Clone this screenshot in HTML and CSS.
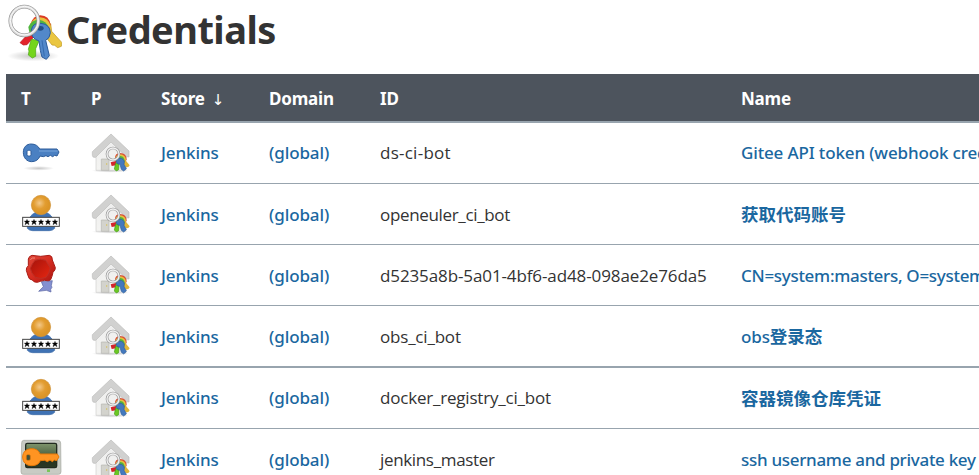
FILE: index.html
```html
<!DOCTYPE html>
<html lang="en">
<head>
<meta charset="utf-8">
<title>Credentials</title>
<link rel="stylesheet" href="styles.css">
</head>
<body>
<svg class="defs" aria-hidden="true">
  <defs>
    <radialGradient id="shade"><stop offset="0" stop-color="#000" stop-opacity=".22"/><stop offset="1" stop-color="#000" stop-opacity="0"/></radialGradient>
    <radialGradient id="head" cx=".42" cy=".4"><stop offset="0" stop-color="#f3c888"/><stop offset=".6" stop-color="#e29d31"/><stop offset="1" stop-color="#dc9527"/></radialGradient>
    <linearGradient id="wax" x2="1" y2="1"><stop offset="0" stop-color="#df4a3c"/><stop offset=".5" stop-color="#d62c20"/><stop offset="1" stop-color="#a81410"/></linearGradient>
    <linearGradient id="disc" x2="1" y2="1"><stop offset="0" stop-color="#a5130b"/><stop offset="1" stop-color="#e62611"/></linearGradient>
    <linearGradient id="screen" x2="0" y2="1"><stop offset="0" stop-color="#7f966d"/><stop offset=".5" stop-color="#4c6040"/><stop offset=".55" stop-color="#24311e"/><stop offset="1" stop-color="#2c3925"/></linearGradient>
    <linearGradient id="wall" x2="0" y2="1"><stop offset="0" stop-color="#ededed"/><stop offset="1" stop-color="#f4f4f2"/></linearGradient>
  </defs>
  <symbol id="key" viewBox="30 21 126 126">
    <ellipse cx="86" cy="130" rx="46" ry="7" fill="url(#shade)"/>
    <path d="M64 57c12 0 21 6 25 15h52l6 9-6 12-7-2-6 4-7-4-7 4-6-3-8 3-10-2c-4 11-13 17-25 17-15 0-25-12-25-28 0-15 9-25 24-25z" fill="#4a80c2" stroke="#2c5b99" stroke-width="3"/>
    <path d="M87 78h56" stroke="#79a5da" stroke-width="3"/>
    <rect x="51" y="76" width="12" height="17" rx="4" fill="#fff" stroke="#2c5b99" stroke-width="3"/>
  </symbol>
  <symbol id="user" viewBox="30 24 126 126">
    <path d="M52 130C52 98 66 80 93 80S134 98 134 130Q128 137 118 137H68Q58 137 52 130Z" fill="#3f72b4" stroke="#3565a4" stroke-width="2"/>
    <circle cx="93" cy="60" r="29" fill="url(#head)" stroke="#cf9239" stroke-width="2"/>
    <rect x="38" y="97" width="110" height="27" fill="#fff" stroke="#444" stroke-width="3"/>
    <g fill="#000" stroke="#000" stroke-width="1"><path id="star" d="M51 103l2 5 6 0-4 4 2 7-6-4-6 4 2-7-4-4 6 0z"/><use href="#star" x="21"/><use href="#star" x="42"/><use href="#star" x="63"/><use href="#star" x="84"/></g>
  </symbol>
  <symbol id="seal" viewBox="30 27 126 126">
    <path d="M94 110l33-3-3 15 2 5-4 6 1 8-14-5-23 3 14-14z" fill="#8490d0" stroke="#5963a2" stroke-width="2"/>
    <path d="M66 31Q92 37 118 31Q128 33 127 45L136 68Q137 74 129 82Q126 96 122 104Q116 110 104 106Q92 108 82 112Q70 112 67 105Q56 104 54 92L49 76Q48 68 55 62L55 42Q57 33 66 31Z" fill="url(#wax)" stroke="#a91c15" stroke-width="3"/>
    <path d="M75 46Q92 39 107 46L121 69Q118 86 108 97Q92 104 76 97Q63 84 61 70Q66 56 75 46Z" fill="url(#disc)" stroke="#bd3026" stroke-width="3"/>
    <path d="M61 44q5-7 14-5" fill="none" stroke="#ef8a7b" stroke-width="3"/>
  </symbol>
  <symbol id="terminal" viewBox="30 27 126 126">
    <path d="M41 34h104q6 0 7 8l1 86q0 8-8 8H40q-7 0-7-8l2-86q0-8 6-8z" fill="#c8cbc4" stroke="#a3a69f" stroke-width="2"/>
    <rect x="47" y="43" width="93" height="73" rx="5" fill="url(#screen)" stroke="#222b20" stroke-width="4"/>
    <path d="M65 59c13 0 22 6 25 16h52l5 9-7 11-7-2-6 5-7-5-8 5-8-4-13 1c-4 10-13 15-26 15-16 0-27-10-27-26 0-15 11-25 27-25z" fill="#ff9422" stroke="#e67909" stroke-width="3"/>
    <rect x="49" y="77" width="12" height="17" rx="4" fill="#435039" stroke="#dc790b" stroke-width="2"/>
    <rect x="111" y="121" width="9" height="8" fill="#7bc558"/>
  </symbol>
  <symbol id="store" viewBox="240 21 126 126">
    <ellipse cx="301" cy="137" rx="56" ry="6" fill="url(#shade)"/>
    <path d="M258 82l45-45 45 45v54h-90z" fill="url(#wall)" stroke="#cfcfcd" stroke-width="2"/>
    <path d="M303 27l54 51v18l-8-1-46-44-46 46q-10 2-10-6V80z" fill="#d1d1d0" stroke="#bdbdbb" stroke-width="2"/>
    <path d="M274 102h23v34h-23z" fill="#d3d3cd" stroke="#b5b5b0" stroke-width="2"/><circle cx="290" cy="117" r="2" fill="#d7be49"/>
    <path d="M302 112l16-4v13l-13 2z" fill="#d3242b"/>
    <path d="M333 98l12 6 14 17-4 5-7 1-17-18z" fill="#e0b73a"/>
    <path d="M315 101q-1-16 15-17 20 1 20 20l-6 6h-20z" fill="#dc4a32"/>
    <path d="M316 101q2-12 15-13 16 1 17 18l-6 5h-20z" fill="#e3c23e"/>
    <path d="M316 105q2-12 15-12 14 1 13 18l-6 5h-18z" fill="#55b43c"/>
    <path d="M317 115l10 2-1 17-7 4-6-6z" fill="#6cc821" stroke="#429b19" stroke-width="2"/>
    <path d="M318 107q5-11 16-7 12 5 8 18l7 13-8 7-7-5-4-15q-11 0-12-11z" fill="#4479bd" stroke="#2c5c9c" stroke-width="2"/>
    <circle cx="309" cy="87" r="18" fill="none" stroke="#999" stroke-width="8"/><circle cx="309" cy="87" r="18" fill="none" stroke="#efefef" stroke-width="4"/>
  </symbol>
</svg>

<header class="title">
  <svg class="title-icon" viewBox="18 12 168 174" aria-hidden="true">
    <ellipse cx="100" cy="168" rx="78" ry="16" fill="url(#shade)"/>
    <path d="M75 112l20-13 8 10-22 25-11 1-10-7z" fill="#e3232a" stroke="#b7141a" stroke-width="2"/>
    <path d="M125 75l27-4 3 23 31 34-2 11-11 4-9-7-8-1-25-32z" fill="#eac641" stroke="#bd9621" stroke-width="2"/>
    <path d="M91 72q9-25 30-26 27 1 31 29l-10 25-50-10z" fill="#dc3b25"/>
    <path d="M90 75q11-22 30-23 26 2 32 26l-14 20-48-8z" fill="#e8c23d"/>
    <path d="M85 81q10-22 32-22 24 3 29 26l-16 20-42-8z" fill="#51b63f"/>
    <path d="M94 118l24 3-11 25v23l-10 5-12-9 2-12-2-5z" fill="#74d51b" stroke="#4aa314" stroke-width="2"/>
    <path d="M94 90q4-23 29-20 27 3 28 28-1 17-14 23l11 46-9 11-13-7-3-11-2-9-4-28q-26-9-23-33z" fill="#5288ca" stroke="#2b5b9b" stroke-width="3"/>
    <path d="M126 121l7 48" stroke="#356bae" stroke-width="3"/><ellipse cx="121" cy="85" rx="10" ry="7" fill="#244e82"/>
    <ellipse cx="73" cy="63" rx="42" ry="43" fill="none" stroke="#8d8d8d" stroke-width="11"/>
    <ellipse cx="73" cy="63" rx="42" ry="43" fill="none" stroke="#dcdcdc" stroke-width="8"/>
    <ellipse cx="73" cy="62" rx="42" ry="43" fill="none" stroke="#fafafa" stroke-width="3"/>
  </svg>
  <h1>Credentials</h1>
</header>

<table class="credentials">
  <colgroup><col class="c-type"><col class="c-provider"><col class="c-store"><col class="c-domain"><col class="c-id"><col class="c-name"></colgroup>
  <thead>
    <tr><th>T</th><th>P</th><th>Store<span class="arrow">↓</span></th><th>Domain</th><th>ID</th><th>Name</th></tr>
  </thead>
  <tbody>
    <tr><td><svg class="icon"><use href="#key"/></svg></td><td><svg class="icon"><use href="#store"/></svg></td><td><a>Jenkins</a></td><td><a>(global)</a></td><td class="loose">ds-ci-bot</td><td><a>Gitee API token (webhook credentials)</a></td></tr>
    <tr class="low"><td><svg class="icon"><use href="#user"/></svg></td><td><svg class="icon"><use href="#store"/></svg></td><td><a>Jenkins</a></td><td><a>(global)</a></td><td class="tight">openeuler_ci_bot</td><td class="mixed"><a><span class="cjk">获取代码账号</span></a></td></tr>
    <tr class="low"><td><svg class="icon"><use href="#seal"/></svg></td><td><svg class="icon"><use href="#store"/></svg></td><td><a>Jenkins</a></td><td><a>(global)</a></td><td class="hash">d5235a8b-5a01-4bf6-ad48-098ae2e76da5</td><td><a class="snug">CN=system:masters, O=system:masters</a></td></tr>
    <tr class="low thick"><td><svg class="icon"><use href="#user"/></svg></td><td><svg class="icon"><use href="#store"/></svg></td><td><a>Jenkins</a></td><td><a>(global)</a></td><td>obs_ci_bot</td><td class="mixed"><a>obs<span class="cjk">登录态</span></a></td></tr>
    <tr><td><svg class="icon"><use href="#user"/></svg></td><td><svg class="icon"><use href="#store"/></svg></td><td><a>Jenkins</a></td><td><a>(global)</a></td><td>docker_registry_ci_bot</td><td class="mixed"><a><span class="cjk">容器镜像仓库凭证</span></a></td></tr>
    <tr class="low"><td><svg class="icon"><use href="#terminal"/></svg></td><td><svg class="icon"><use href="#store"/></svg></td><td><a>Jenkins</a></td><td><a>(global)</a></td><td class="tight">jenkins_master</td><td><a class="snug">ssh username and private key</a></td></tr>
  </tbody>
</table>
</body>
</html>
```

FILE: styles.css
```css
* { box-sizing: border-box; }
html { overflow: hidden; }
body {
  margin: 0;
  padding: 4px 0 0 6px;
  height: 475px;
  overflow: hidden;
  background: #fff;
  color: #333;
  font-family: "Open Sans", "Noto Sans", "Noto Sans CJK SC", sans-serif;
  font-size: 17px;
}
.defs { position: absolute; width: 0; height: 0; }
.title { display: flex; height: 70px; }
.title-icon { width: 56px; height: 58px; }
h1 {
  margin: 0 0 0 4px;
  font-family: "Noto Sans", sans-serif;
  font-size: 38px;
  font-weight: 700;
  line-height: 50px;
  letter-spacing: -0.55px;
}
.credentials {
  width: 973px;
  table-layout: fixed;
  border-collapse: separate;
  border-spacing: 0;
}
.c-type, .c-provider { width: 70px; }
.c-store { width: 108px; }
.c-domain { width: 111px; }
.c-id { width: 361px; }
th, td {
  padding: 0 0 0 15px;
  text-align: left;
  vertical-align: middle;
  white-space: nowrap;
  line-height: 24px;
  overflow: hidden;
}
th {
  height: 49px;
  padding-top: 2px;
  background: #4d545d;
  border-bottom: 2px solid #98a4ae;
  color: #fff;
  font-family: "Noto Sans", sans-serif;
  font-size: 17px;
  font-weight: 700;
  letter-spacing: -0.2px;
}
.arrow {
  margin-left: 7px;
  font-family: "DejaVu Sans", sans-serif;
  font-size: 15px;
  font-weight: 400;
  line-height: 1;
}
td { height: 61px; border-bottom: 1px solid #98a4ae; }
.low td:nth-child(n+3):not(.mixed) { padding-top: 2px; }
td:nth-child(5) { letter-spacing: -0.2px; }
td.loose { letter-spacing: 0.25px; }
td.hash { letter-spacing: -0.11px; }
td.tight { letter-spacing: -0.34px; }
.thick td { height: 62px; border-bottom-width: 2px; }
a { color: #1a67a0; font-family: "Noto Sans", sans-serif; font-weight: 500; letter-spacing: -0.1px; }
td:last-child a { letter-spacing: -0.15px; }
td:last-child a.snug { letter-spacing: -0.3px; }
a .cjk { font-family: "Noto Sans CJK SC", sans-serif; font-size: 17.5px; font-weight: 700; letter-spacing: 0; }
.icon { display: block; width: 42px; height: 42px; margin-left: -1px; }
```
